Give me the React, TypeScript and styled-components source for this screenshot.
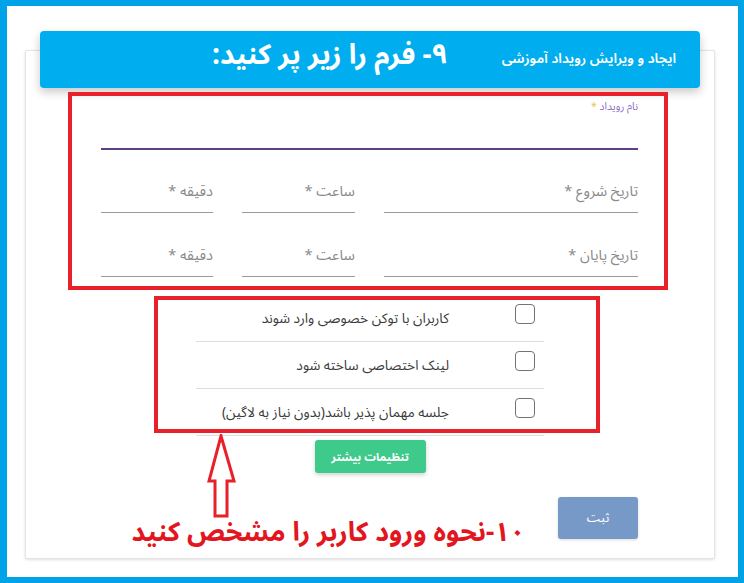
import React from 'react';
import styled, { createGlobalStyle } from 'styled-components';

const GlobalStyle = createGlobalStyle`
  html, body {
    margin: 0;
    padding: 0;
    background: #ffffff;
  }
  * {
    box-sizing: border-box;
  }
`

const fa = `"Noto Sans Arabic", "DejaVu Sans", sans-serif`;

const Frame = styled.div`
    width: 744px;
    height: 583px;
    border: 6px solid #00a2e8;
    border-left-width: 7px;
    background: #ffffff;
    overflow: hidden;
    font-family: ${fa};
`

const Card = styled.div`
    position: relative;
    direction: rtl;
    width: 690px;
    height: 509px;
    margin: 44px 0 0 18px;
    background: #ffffff;
    border: 1px solid #e4e4e4;
    border-radius: 2px;
    box-shadow: 0 1px 3px rgba(0, 0, 0, 0.12);
`

const Header = styled.div`
    display: flex;
    align-items: center;
    gap: 54px;
    height: 57px;
    margin: -20px 14px 0;
    padding: 0 24px 2px 0;
    background: #00aeef;
    border-radius: 4px;
    box-shadow: 0 4px 10px rgba(0, 0, 0, 0.22);
    color: #ffffff;
`

const HeaderTitle = styled.div`
    font-size: 13.8px;
    font-weight: 600;
`

const BigTitle = styled.div`
    font-size: 28px;
    font-weight: 700;
    line-height: 1;
    margin-bottom: 6px;
`

const Annot = styled.div`
    border: 4px solid #e8202a;
`

const FormBox = styled(Annot)`
    margin: 4px 46px 0 42px;
    padding: 4px 26px 9px 29px;
`

const Label = styled.div`
    font-size: 10.5px;
    line-height: 14px;
    color: #8e6cc4;
    span {
        color: #e6c84a;
    }
`

const NameInput = styled.div`
    height: 36px;
    border-bottom: 2px solid #5d3f86;
`

const TimeRow = styled.div<{ $top: number }>`
    display: grid;
    grid-template-columns: 254px 113px 112px;
    column-gap: 29px;
    margin-top: ${p => p.$top}px;
`

const Field = styled.div`
    font-size: 14.5px;
    line-height: 22px;
    padding-bottom: 9px;
    color: #8a8a8a;
    border-bottom: 1px solid #9a9a9a;
`

const ListWrap = styled.div`
    position: relative;
    width: 348px;
    margin: 5px auto 0;
`

const ListAnnot = styled(Annot)`
    position: absolute;
    top: 1px;
    right: -56px;
    bottom: 3px;
    left: -42px;
    pointer-events: none;
`

const Row = styled.div`
    display: flex;
    align-items: center;
    gap: 66px;
    height: 47px;
    padding: 0 9px 0 0;
    border-bottom: 1px solid #dedede;
`

const Check = styled.span`
    flex: 0 0 auto;
    width: 20px;
    height: 20px;
    margin-bottom: 8px;
    border: 1.5px solid #737373;
    border-radius: 4px;
`

const RowText = styled.span`
    font-size: 13.8px;
    color: #3c3c3c;
`

const MoreButton = styled.button`
    display: block;
    width: 111px;
    height: 33px;
    margin: 4px auto 0;
    border: none;
    border-radius: 3px;
    background: #3dca8a;
    box-shadow: 0 2px 4px rgba(0, 0, 0, 0.18);
    color: #ffffff;
    font-family: ${fa};
    font-size: 11.5px;
    font-weight: 700;
`

const Footer = styled.div`
    display: flex;
    align-items: flex-start;
    gap: 33px;
    margin-top: 24px;
    padding-right: 76px;
`

const SubmitButton = styled.button`
    flex: 0 0 auto;
    width: 80px;
    height: 42px;
    border: none;
    border-radius: 3px;
    background: #7699c8;
    box-shadow: 0 1px 3px rgba(0, 0, 0, 0.15);
    color: #ffffff;
    font-family: ${fa};
    font-size: 13px;
`

const Note = styled.div`
    margin-top: 7px;
    font-size: 26.7px;
    font-weight: 700;
    color: #e3151e;
    white-space: nowrap;
`

const Arrow = styled.svg`
    position: absolute;
    left: 181px;
    top: 383px;
`

const rows = [
    'کاربران با توکن خصوصی وارد شوند',
    'لینک اختصاصی ساخته شود',
    'جلسه مهمان پذیر باشد(بدون نیاز به لاگین)',
]

const App = () => {
    return (
        <Frame>
            <GlobalStyle />
            <Card>
                <Header>
                    <HeaderTitle>ایجاد و ویرایش رویداد آموزشی</HeaderTitle>
                    <BigTitle>۹- فرم را زیر پر کنید:</BigTitle>
                </Header>
                <FormBox>
                    <Label>نام رویداد <span>*</span></Label>
                    <NameInput />
                    <TimeRow $top={31}>
                        <Field>تاریخ شروع *</Field>
                        <Field>ساعت *</Field>
                        <Field>دقیقه *</Field>
                    </TimeRow>
                    <TimeRow $top={32}>
                        <Field>تاریخ پایان *</Field>
                        <Field>ساعت *</Field>
                        <Field>دقیقه *</Field>
                    </TimeRow>
                </FormBox>
                <ListWrap>
                    {rows.map(r => (
                        <Row key={r}>
                            <Check />
                            <RowText>{r}</RowText>
                        </Row>
                    ))}
                    <ListAnnot />
                </ListWrap>
                <MoreButton>تنظیمات بیشتر</MoreButton>
                <Footer>
                    <SubmitButton>ثبت</SubmitButton>
                    <Note>۱۰-نحوه ورود کاربر را مشخص کنید</Note>
                </Footer>
                <Arrow width="30" height="86" viewBox="0 0 30 86">
                    <path d="M14 2 L27 47 L20 47 L20 82 L8 82 L8 47 L2 47 Z" fill="none" stroke="#e8202a" strokeWidth="3" strokeLinejoin="miter" />
                </Arrow>
            </Card>
        </Frame>
    );
};

export default App;
